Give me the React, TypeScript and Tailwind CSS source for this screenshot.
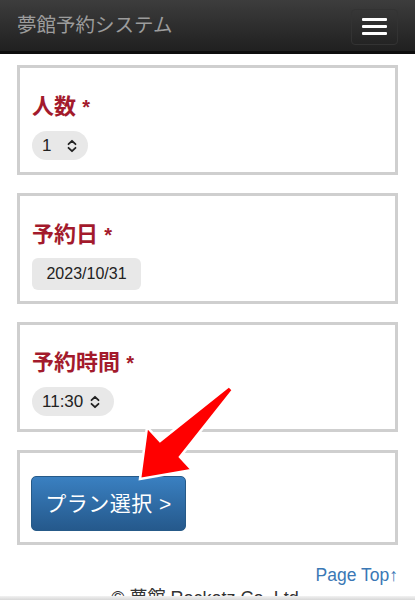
import React from "react";

const FONT = { fontFamily: '"Liberation Sans", "Noto Sans CJK JP", sans-serif' };

function UpDown() {
  return (
    <svg width="12" height="14" viewBox="0 0 12 14" fill="none" stroke="#222" strokeWidth="1.8" strokeLinecap="round" strokeLinejoin="round">
      <path d="M2.5 5.2 L6 1.8 L9.5 5.2" />
      <path d="M2.5 8.8 L6 12.2 L9.5 8.8" />
    </svg>
  );
}

function Label({ children }: { children: React.ReactNode }) {
  return (
    <div className="text-[22px] leading-[30px] font-bold text-[#a31a2c]">
      {children} <span className="text-[20px]">*</span>
    </div>
  );
}

export default function App() {
  return (
    <div className="relative w-[415px] h-[600px] overflow-hidden bg-white" style={FONT}>
      <header className="h-[54px] bg-gradient-to-b from-[#3d3d3d] to-[#202020] border-b-[3px] border-[#0e0e0e] flex items-center justify-between pl-[17px] pr-[17px]">
        <div className="text-[19.5px] text-[#9c9c9c]">夢館予約システム</div>
        <div className="w-[47px] h-[36px] border border-[#333333] rounded-[4px] flex flex-col items-center justify-center gap-[4px] mt-[2px]">
          <span className="block w-[25px] h-[3px] bg-white rounded-[1px]" />
          <span className="block w-[25px] h-[3px] bg-white rounded-[1px]" />
          <span className="block w-[25px] h-[3px] bg-white rounded-[1px]" />
        </div>
      </header>

      <main className="px-[17px] pt-[11px] flex flex-col gap-[18px]">
        <section className="border-[3px] border-[#cfcfcf] h-[110px] pl-[12px] pt-[24px] flex flex-col">
          <Label>人数</Label>
          <div className="mt-[9px] w-[56px] h-[29px] rounded-full bg-[#e8e8e8] flex items-center pl-[10px] gap-[15px] text-[17px] text-[#222]">
            <span>1</span>
            <UpDown />
          </div>
        </section>

        <section className="border-[3px] border-[#cfcfcf] h-[111px] pl-[12px] pt-[24px] flex flex-col">
          <Label>予約日</Label>
          <div className="mt-[8px] w-[109px] h-[32px] rounded-[6px] bg-[#e8e8e8] flex items-center justify-center text-[16px] text-[#222]">
            2023/10/31
          </div>
        </section>

        <section className="border-[3px] border-[#cfcfcf] h-[110px] pl-[12px] pt-[23px] flex flex-col">
          <Label>予約時間</Label>
          <div className="mt-[9px] w-[82px] h-[29px] rounded-full bg-[#e8e8e8] flex items-center pl-[10px] gap-[6px] text-[17px] text-[#222]">
            <span>11:30</span>
            <UpDown />
          </div>
        </section>

        <section className="border-[3px] border-[#cfcfcf] h-[95px] pl-[11px] pt-[23px]">
          <button className="w-[155px] h-[55px] rounded-[5px] border border-[#265a88] bg-gradient-to-b from-[#3a80c1] to-[#25598c] text-white text-[21px] tracking-[0.5px] flex items-center justify-center">
            プラン選択 &gt;
          </button>
        </section>
      </main>

      <div className="flex justify-end pr-[17px] mt-[18px] leading-[24px]">
        <span className="text-[17.5px] text-[#3a78b5]">Page Top↑</span>
      </div>
      <div className="text-center text-[18px] leading-[20px] text-[#333] mt-[1px]">© 夢館 Rocketz Co.,Ltd.</div>

      <div className="absolute left-0 right-0 bottom-0 h-[4px] bg-gradient-to-b from-[#f2f2f2] to-[#d8d8d8]" />

      <svg className="absolute left-0 top-0 pointer-events-none" width="415" height="600" viewBox="0 0 415 600">
        <polygon
          points="229,386 233,390 180,457 192,470 140,479 147,427 160,441"
          fill="#f00"
          stroke="#fff"
          strokeWidth="2.5"
          strokeLinejoin="miter"
        />
      </svg>
    </div>
  );
}
